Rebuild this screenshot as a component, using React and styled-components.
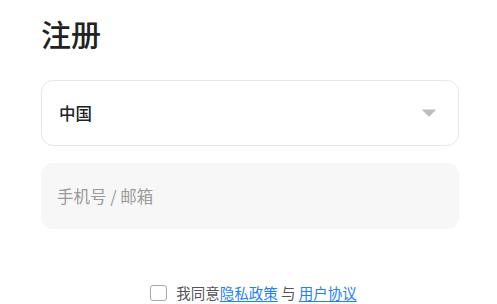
import React, { useState } from "react";
import styled, { createGlobalStyle } from "styled-components";

const GlobalStyle = createGlobalStyle`
  html, body {
    margin: 0;
    padding: 0;
    background: #fff;
    font-family: "Noto Sans CJK SC", "Noto Sans", sans-serif;
  }
`;

const App = () => {
  const [agree, setAgree] = useState(false);

  return (
    <>
      <GlobalStyle />
      <Page>
        <Title>注册</Title>

        <SelectBox>
          <span>中国</span>
          <Caret viewBox="0 0 14 8">
            <path d="M1 0.5h12a0.6 0.6 0 0 1 0.45 1L7.45 7.3a0.6 0.6 0 0 1 -0.9 0L0.55 1.5A0.6 0.6 0 0 1 1 0.5z" />
          </Caret>
        </SelectBox>

        <InputBox placeholder="手机号 / 邮箱" />

        <AgreeRow>
          <CheckBox checked={agree} onClick={() => setAgree(!agree)} />
          <AgreeText>
            我同意<LinkText>隐私政策</LinkText> 与 <LinkText>用户协议</LinkText>
          </AgreeText>
        </AgreeRow>
      </Page>
    </>
  );
};

export default App;

const Page = styled.div`
  display: flex;
  flex-direction: column;
  padding: 15px 38px 0 41px;
  box-sizing: border-box;
  width: 497px;
  height: 304px;
  overflow: hidden;
`;

const Title = styled.h1`
  margin: 0;
  font-size: 30px;
  line-height: 36px;
  font-weight: 500;
  color: #222;
`;

const SelectBox = styled.div`
  margin-top: 29px;
  height: 66px;
  box-sizing: border-box;
  border: 1px solid #e8e8e8;
  border-radius: 12px;
  display: flex;
  align-items: center;
  justify-content: space-between;
  padding: 0 22px 0 17px;
  span {
    font-size: 16.5px;
    font-weight: 500;
    color: #222;
  }
`;

const Caret = styled.svg`
  width: 14px;
  height: 8px;
  fill: #bdbdbd;
`;

const InputBox = styled.input`
  margin-top: 17px;
  height: 66px;
  box-sizing: border-box;
  border: none;
  outline: none;
  border-radius: 12px;
  background: #f7f7f7;
  padding: 0 16px;
  font-family: inherit;
  font-size: 16.5px;
  color: #222;
  &::placeholder {
    color: #9a9a9a;
  }
`;

const AgreeRow = styled.div`
  margin-top: 54px;
  display: flex;
  align-items: center;
  justify-content: center;
  gap: 9px;
  padding-left: 7px;
`;

const CheckBox = styled.div`
  width: 17px;
  height: 16px;
  box-sizing: border-box;
  border: 1px solid ${(props) => (props.checked ? "#1e80ff" : "#a8a8a8")};
  background: ${(props) => (props.checked ? "#1e80ff" : "#fff")};
  border-radius: 3px;
  cursor: pointer;
`;

const AgreeText = styled.span`
  font-size: 14.5px;
  line-height: 20px;
  color: #555;
`;

const LinkText = styled.a`
  color: #1e80ff;
  text-decoration: underline;
  text-underline-offset: 2px;
  cursor: pointer;
`;
